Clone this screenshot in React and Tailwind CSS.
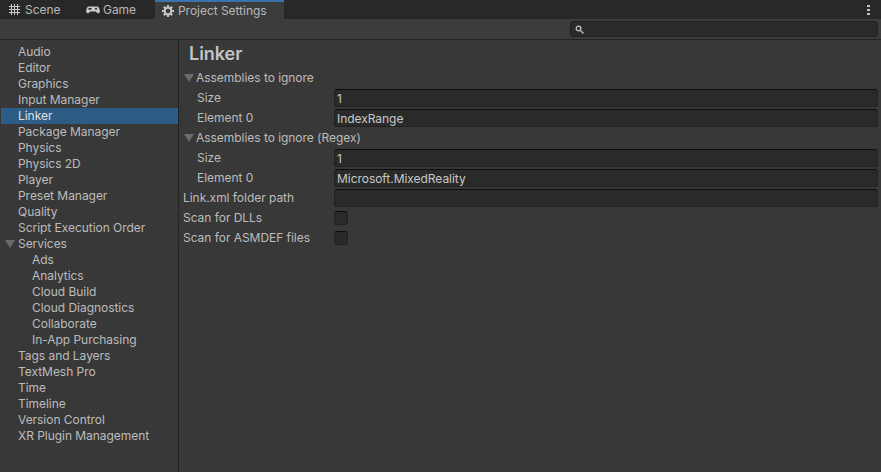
import React from "react";

const items = [
  { name: "Audio" },
  { name: "Editor" },
  { name: "Graphics" },
  { name: "Input Manager" },
  { name: "Linker", selected: true },
  { name: "Package Manager" },
  { name: "Physics" },
  { name: "Physics 2D" },
  { name: "Player" },
  { name: "Preset Manager" },
  { name: "Quality" },
  { name: "Script Execution Order" },
  { name: "Services", open: true },
  { name: "Ads", sub: true },
  { name: "Analytics", sub: true },
  { name: "Cloud Build", sub: true },
  { name: "Cloud Diagnostics", sub: true },
  { name: "Collaborate", sub: true },
  { name: "In-App Purchasing", sub: true },
  { name: "Tags and Layers" },
  { name: "TextMesh Pro" },
  { name: "Time" },
  { name: "Timeline" },
  { name: "Version Control" },
  { name: "XR Plugin Management" },
];

const Arrow = () => (
  <svg width="10" height="8" viewBox="0 0 10 8" className="shrink-0">
    <path d="M0 0H10L5 8Z" fill="#6a6a6a" />
  </svg>
);

const GridIcon = () => (
  <svg width="11" height="11" viewBox="0 0 11 11" className="shrink-0">
    <path d="M2.5 0V11M5.5 0V11M8.5 0V11M0 2.5H11M0 5.5H11M0 8.5H11" stroke="#c8c8c8" strokeWidth="1" />
  </svg>
);

const PadIcon = () => (
  <svg width="14" height="8" viewBox="0 0 14 8" className="shrink-0">
    <path d="M3 0.5H11C12.6 0.5 13.7 2.5 13.8 5C13.9 7 12.4 8 11 6.8L9.6 5.6H4.4L3 6.8C1.6 8 0.1 7 0.2 5C0.3 2.5 1.4 0.5 3 0.5Z" fill="#c8c8c8" />
    <rect x="2.5" y="2" width="3" height="1.6" fill="#282828" />
    <circle cx="10" cy="2.8" r="1" fill="#282828" />
  </svg>
);

const GearIcon = () => (
  <svg width="12" height="12" viewBox="0 0 12 12" className="shrink-0">
    <circle cx="6" cy="6" r="3.4" fill="none" stroke="#c4c4c4" strokeWidth="2.2" />
    <path d="M6 0V2.5M6 9.5V12M0 6H2.5M9.5 6H12M1.8 1.8L3.5 3.5M8.5 8.5L10.2 10.2M10.2 1.8L8.5 3.5M3.5 8.5L1.8 10.2" stroke="#c4c4c4" strokeWidth="2" />
  </svg>
);

const Field = ({ value }) => (
  <div className="flex-1 h-[18px] leading-[17px] px-[2px] rounded-[3px] bg-[#2a2a2a] border border-[#212121] border-t-[#0d0d0d] text-[#c8c8c8] mr-[3px]">
    {value}
  </div>
);

const Row = ({ label, indent, children }) => (
  <div className={`flex items-center h-5 ${indent ? "pl-[18px]" : "pl-[4px]"}`}>
    <div className={indent ? "w-[137px]" : "w-[151px]"}>{label}</div>
    {children}
  </div>
);

const Foldout = ({ label }) => (
  <div className="flex items-center h-5 pl-[5px] gap-[2px]">
    <Arrow />
    <span>{label}</span>
  </div>
);

const Check = () => <div className="w-[14px] h-[14px] rounded-[3px] bg-[#2a2a2a] border border-[#212121] border-t-[#0d0d0d]" />;

export default function App() {
  return (
    <div className="w-[881px] h-[472px] overflow-hidden flex flex-col bg-[#383838] text-[12px] tracking-[-0.04px] font-['Inter',sans-serif] text-[#bcbcbc]">
      <div className="h-[19px] flex items-end bg-[#282828] text-[#b8b8b8]">
        <div className="w-[70px] h-[19px] flex items-center pl-[9px] gap-[5px]">
          <GridIcon />
          <span>Scene</span>
        </div>
        <div className="w-[75px] h-[19px] flex items-center pl-[16px] gap-[3px]">
          <PadIcon />
          <span>Game</span>
        </div>
        <div className="ml-[10px] w-[129px] h-[19px] flex items-center pl-[7px] gap-[4px] bg-[#3c3c3c] border-t-2 border-[#3a72b0]">
          <GearIcon />
          <span>Project Settings</span>
        </div>
        <div className="ml-auto mr-[11px] mb-[4px] flex flex-col gap-[2px]">
          <div className="w-[3px] h-[2px] bg-[#c4c4c4]" />
          <div className="w-[3px] h-[2px] bg-[#c4c4c4]" />
          <div className="w-[3px] h-[2px] bg-[#c4c4c4]" />
        </div>
      </div>
      <div className="h-[21px] flex items-center justify-end bg-[#3c3c3c] border-b border-[#232323] pr-[3px]">
        <div className="w-[308px] h-[16px] rounded-[4px] bg-[#2a2a2a] border border-[#212121] flex items-center pl-[4px]">
          <svg width="9" height="9" viewBox="0 0 9 9">
            <circle cx="3.5" cy="3.5" r="2.3" fill="none" stroke="#c4c4c4" strokeWidth="1.3" />
            <path d="M5.5 5.5L8.5 8.5" stroke="#c4c4c4" strokeWidth="1.2" />
          </svg>
        </div>
      </div>
      <div className="flex-1 flex min-h-0">
        <div className="w-[179px] pl-[1px] pt-[4px] border-r border-[#232323]">
          {items.map((item) => (
            <div
              key={item.name}
              className={`relative h-4 leading-4 ${item.sub ? "pl-[31px]" : "pl-[17px]"} ${item.selected ? "bg-[#2c5d87] text-[#e0e0e0]" : ""}`}
            >
              {item.open && (
                <span className="absolute left-[4px] top-[4px]">
                  <Arrow />
                </span>
              )}
              {item.name}
            </div>
          ))}
        </div>
        <div className="flex-1 pt-[1px]">
          <div className="h-[27px] leading-[26px] pl-[10px] text-[18px] font-semibold text-[#c4c4c4]">Linker</div>
          <Foldout label="Assemblies to ignore" />
          <Row label="Size" indent><Field value="1" /></Row>
          <Row label="Element 0" indent><Field value="IndexRange" /></Row>
          <Foldout label="Assemblies to ignore (Regex)" />
          <Row label="Size" indent><Field value="1" /></Row>
          <Row label="Element 0" indent><Field value="Microsoft.MixedReality" /></Row>
          <Row label="Link.xml folder path"><Field value="" /></Row>
          <Row label="Scan for DLLs"><Check /></Row>
          <Row label="Scan for ASMDEF files"><Check /></Row>
        </div>
      </div>
    </div>
  );
}
